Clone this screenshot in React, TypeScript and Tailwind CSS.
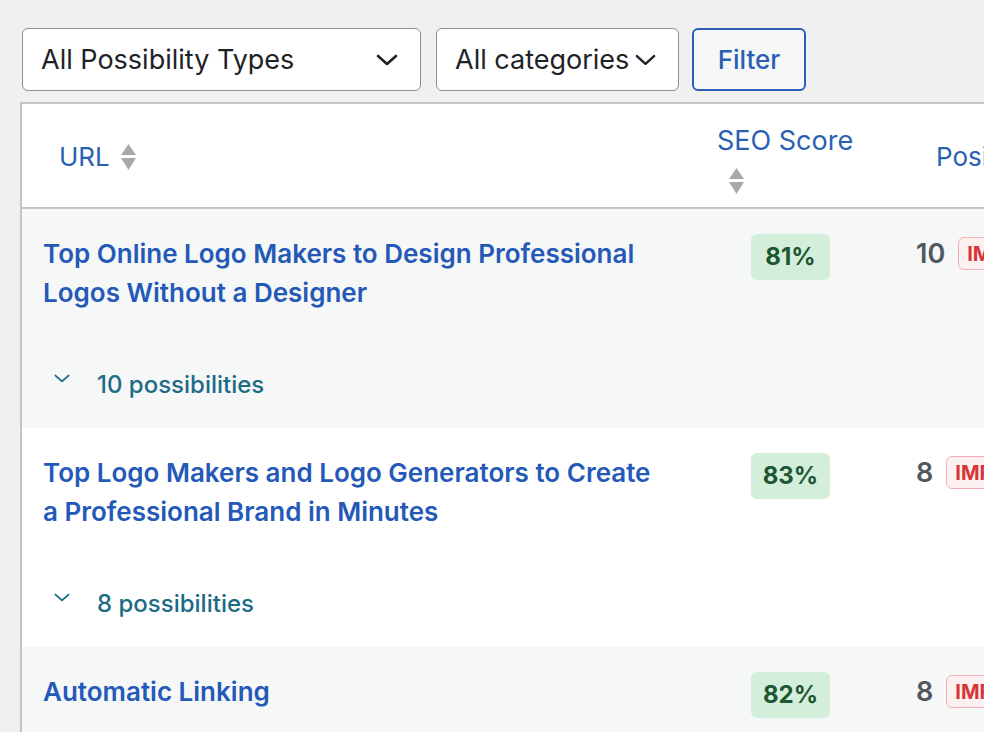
import React from "react";

const font = { fontFamily: "Inter, 'Noto Sans', sans-serif" };

function Chevron({ className }: { className?: string }) {
  return (
    <svg className={className} viewBox="0 0 22 12" fill="none">
      <path d="M2 2 L11 10 L20 2" stroke="currentColor" strokeWidth="2.6" strokeLinecap="round" strokeLinejoin="round" />
    </svg>
  );
}

function SortArrows() {
  return (
    <svg width="17" height="28" viewBox="0 0 17 28" className="text-[#a7aaad]">
      <path d="M8.5 1 L16 12 L1 12 Z" fill="currentColor" />
      <path d="M1 15 L16 15 L8.5 27 Z" fill="currentColor" />
    </svg>
  );
}

type Row = { title: string[]; score: string; pos: string; poss?: string; bg: string };

const rows: Row[] = [
  {
    title: ["Top Online Logo Makers to Design Professional", "Logos Without a Designer"],
    score: "81%",
    pos: "10",
    poss: "10 possibilities",
    bg: "bg-[#f6f7f7]",
  },
  {
    title: ["Top Logo Makers and Logo Generators to Create", "a Professional Brand in Minutes"],
    score: "83%",
    pos: "8",
    poss: "8 possibilities",
    bg: "bg-white",
  },
  {
    title: ["Automatic Linking"],
    score: "82%",
    pos: "8",
    bg: "bg-[#f6f7f7]",
  },
];

export default function App() {
  return (
    <div className="w-[984px] h-[732px] overflow-hidden bg-[#f0f0f1]" style={font}>
      <div className="pt-[28px] pl-[22px] flex items-center">
        <div className="w-[399px] h-[63px] border-[1.5px] border-[#8c8f94] rounded-[6px] bg-white flex items-center justify-between pl-[18px] pr-[22px]">
          <span className="text-[27px] text-[#1d2327] leading-none">All Possibility Types</span>
          <Chevron className="w-[22px] h-[12px] text-[#1d2327]" />
        </div>
        <div className="ml-[15px] w-[243px] h-[63px] border-[1.5px] border-[#8c8f94] rounded-[6px] bg-white flex items-center pl-[18px]">
          <span className="text-[27px] text-[#1d2327] leading-none">All categories</span>
          <Chevron className="ml-[6px] w-[21px] h-[12px] text-[#1d2327]" />
        </div>
        <div className="ml-[13px] w-[114px] h-[63px] border-2 border-[#2a5fb3] rounded-[6px] bg-[#f6f7f7] flex items-center justify-center">
          <span className="text-[26px] font-medium text-[#2a5fb3] leading-none">Filter</span>
        </div>
      </div>

      <div className="mt-[11px] ml-[20px] w-[1100px] border-l-2 border-t-2 border-[#c3c4c7]">
        {/* header */}
        <div className="flex h-[105px] bg-white border-b-2 border-[#c3c4c7]">
          <div className="w-[680px] flex items-center pl-[37px] gap-[10px] pt-[2px]">
            <span className="text-[26px] text-[#2a5fb3]">URL</span>
            <SortArrows />
          </div>
          <div className="w-[196px] flex flex-col items-start pl-[15px] pt-[19px]">
            <span className="text-[27px] text-[#2a5fb3] leading-[36px]">SEO Score</span>
            <div className="ml-[11px] mt-[8px]">
              <SortArrows />
            </div>
          </div>
          <div className="flex items-center pl-[38px] pt-[2px]">
            <span className="text-[26px] text-[#2a5fb3]">Position</span>
          </div>
        </div>
        {rows.map((r, i) => (
          <div key={i} className={`flex ${r.bg} ${r.poss ? "h-[219px]" : "h-[100px]"}`}>
            <div className="w-[680px] pl-[21px] pt-[25px]">
              <div className="text-[26px] font-semibold text-[#2459b8] leading-[39px]">
                {r.title.map((t, j) => (
                  <div key={j}>{t}</div>
                ))}
              </div>
              {r.poss && (
                <div className="flex items-center mt-[58px]">
                  <Chevron className="ml-[11px] w-[16px] h-[9px] text-[#1d6b85] -mt-[14px]" />
                  <span className="ml-[27px] text-[24px] font-medium text-[#1d6b85] leading-[30px]">{r.poss}</span>
                </div>
              )}
            </div>
            <div className="w-[196px] pt-[25px] pl-[49px]">
              <div className="w-[79px] h-[46px] rounded-[6px] bg-[#d3efdc] flex items-center justify-center">
                <span className="text-[24px] font-bold text-[#1e5631]">{r.score}</span>
              </div>
            </div>
            <div className="pt-[26px] pl-[18px] flex items-start gap-[13px]">
              <span className="text-[27px] font-semibold text-[#50575e] leading-[38px]">{r.pos}</span>
              <div className="mt-[2px] h-[33px] px-[8px] rounded-[6px] border-[1.5px] border-[#f1aeb5] bg-[#fcf0f1] flex items-center">
                <span className="text-[20px] font-bold text-[#d63638]">IMPORTANT</span>
              </div>
            </div>
          </div>
        ))}
      </div>
    </div>
  );
}
